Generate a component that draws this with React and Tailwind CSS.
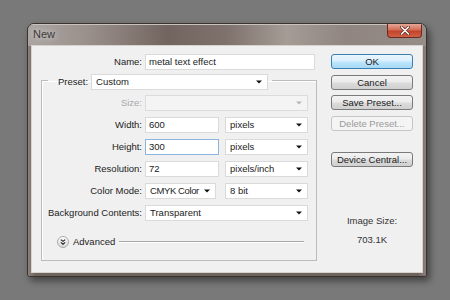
import React from "react";

function Arrow({ disabled }) {
  return (
    <svg width="6" height="4" viewBox="0 0 6 4" className="shrink-0">
      <path d="M0 0.5 L6 0.5 L3 3.5 Z" fill={disabled ? "#b5b5b5" : "#111"} />
    </svg>
  );
}

function Select({ w, text, disabled, className = "", textClass = "" }) {
  return (
    <div
      className={`${w} shrink-0 h-[16px] flex items-center justify-between pl-[4px] pr-[5px] border ${
        disabled ? "bg-[#f4f4f4] border-[#dcdcdc]" : "bg-white border-[#dadada]"
      } ${className}`}
    >
      <span className={`leading-none whitespace-nowrap ${textClass}`}>{text}</span>
      <Arrow disabled={disabled} />
    </div>
  );
}

function Input({ w, text, focus }) {
  return (
    <div
      className={`${w} shrink-0 h-[16px] flex items-center pl-[3px] bg-white border ${
        focus ? "border-[#8cb4de]" : "border-[#dadada]"
      }`}
    >
      <span className="leading-none whitespace-nowrap">{text}</span>
    </div>
  );
}

function Row({ label, children, disabled }) {
  return (
    <div className="h-[16px] flex items-center">
      <div className={`w-[103px] shrink-0 text-right pr-[3px] whitespace-nowrap ${disabled ? "text-[#a8a8a8]" : ""}`}>{label}</div>
      <div className="flex items-center">{children}</div>
    </div>
  );
}

function Btn({ children, ok, disabled, className = "" }) {
  let cls =
    "bg-[linear-gradient(180deg,#f3f3f3_0%,#ebebeb_48%,#dcdcdc_52%,#d0d0d0_100%)] border-[#7a7a7a] text-[#1a1a1a]";
  if (ok)
    cls =
      "bg-[linear-gradient(180deg,#eaf6fd_0%,#d9effc_48%,#bee6fd_52%,#a7d9f5_100%)] border-[#3c7fb1] text-[#1a1a1a]";
  if (disabled) cls = "bg-[#f4f4f4] border-[#c4c7c9] text-[#9a9a9a]";
  return (
    <div
      className={`w-[82px] h-[15px] rounded-[3px] border flex items-center justify-center leading-none whitespace-nowrap ${cls} ${className}`}
    >
      {children}
    </div>
  );
}

export default function App() {
  return (
    <div className="w-[450px] h-[300px] overflow-hidden bg-[#797979] pt-[23px] pl-[27px] font-['Liberation_Sans',Arial,sans-serif] text-[9.5px] text-[#222]">
      <div className="w-[400px] h-[254px] rounded-t-[7px] rounded-b-[3px] border border-[#3b3230] bg-[#6f635d] shadow-[3px_4px_7px_rgba(0,0,0,0.45),inset_0_0_0_1px_#9d928d] flex flex-col overflow-hidden">
        {/* title bar */}
        <div className="h-[22px] shrink-0 px-[4px] flex items-start justify-between bg-[linear-gradient(90deg,#aaa5a2_0%,#9a908b_15%,#72655f_35%,#7f726c_50%,#a59c96_65%,#908580_80%,#968c88_100%)] shadow-[inset_0_1px_0_#c9c3bf]">
          <div className="pt-[5px] pl-[1px] text-[11px] text-[#3a3a3a] leading-none [text-shadow:0_0_6px_rgba(255,255,255,0.8)]">
            New
          </div>
          <div className="w-[35px] h-[14px] rounded-b-[4px] border border-t-0 border-[#6b2a20] bg-[linear-gradient(180deg,#e6a796_0%,#d36d57_45%,#c2432b_55%,#d06244_100%)] flex items-center justify-center">
            <svg width="10" height="9" viewBox="0 0 10 9">
              <path d="M1.5 1 L8.5 8 M8.5 1 L1.5 8" stroke="#5a2a22" strokeWidth="3" strokeLinecap="round" />
              <path d="M1.5 1 L8.5 8 M8.5 1 L1.5 8" stroke="#fff" strokeWidth="1.6" strokeLinecap="round" />
            </svg>
          </div>
        </div>
        {/* frame + content */}
        <div className="flex-1 px-[4px] pb-[4px] bg-[linear-gradient(90deg,#8b807b_0%,#6f635d_2%,#6f635d_98%,#8b807b_100%)] flex">
          <div className="flex-1 bg-[#f0f0f0] flex shadow-[0_0_0_1px_#d8d2cf]">
            {/* left column */}
            <div className="w-[286px] shrink-0 pl-[9px] pt-[8px]">
              <div className="h-[16px] flex items-center">
                <div className="w-[104px] shrink-0 text-right pr-[3px]">Name:</div>
                <Input w="w-[170px]" text="metal text effect" />
              </div>
              <fieldset className="mt-[4px] w-[276px] min-w-0 h-[187px] border border-[#bcbcbc] shadow-[inset_1px_1px_0_#ffffff]">
                <legend className="ml-[6px] pl-[10px] pr-[4px] h-[12px]">
                  <div className="flex items-center h-[16px]">
                    <span className="pr-[3px]">Preset:</span>
                    <Select w="w-[177px]" text="Custom" />
                  </div>
                </legend>
                <div className="mt-[9px] flex flex-col gap-[6px]">
                  <Row label="Size:" disabled>
                    <Select w="w-[163px]" text="" disabled />
                  </Row>
                  <Row label="Width:">
                    <Input w="w-[74px]" text="600" />
                    <Select w="w-[83px]" text="pixels" className="ml-[6px]" />
                  </Row>
                  <Row label="Height:">
                    <Input w="w-[74px]" text="300" focus />
                    <Select w="w-[83px]" text="pixels" className="ml-[6px]" />
                  </Row>
                  <Row label="Resolution:">
                    <Input w="w-[74px]" text="72" />
                    <Select w="w-[83px]" text="pixels/inch" className="ml-[6px]" />
                  </Row>
                  <Row label="Color Mode:">
                    <Select w="w-[71px]" text="CMYK Color" textClass="tracking-[-0.4px]" className="pr-[4px]" />
                    <Select w="w-[83px]" text="8 bit" className="ml-[9px]" />
                  </Row>
                  <Row label="Background Contents:">
                    <Select w="w-[163px]" text="Transparent" />
                  </Row>
                </div>
                <div className="mt-[14px] h-[13px] flex items-center pl-[15px]">
                  <svg width="12" height="12" viewBox="0 0 12 12" className="shrink-0">
                    <defs>
                      <linearGradient id="adv" x1="0" y1="0" x2="0" y2="1">
                        <stop offset="0" stopColor="#ffffff" />
                        <stop offset="1" stopColor="#d6d6d6" />
                      </linearGradient>
                    </defs>
                    <circle cx="6" cy="6" r="5.5" fill="url(#adv)" stroke="#a9a9a9" />
                    <path d="M3.8 3.6 L6 5.4 L8.2 3.6 M3.8 6.4 L6 8.2 L8.2 6.4" fill="none" stroke="#222" strokeWidth="1.1" />
                  </svg>
                  <span className="ml-[4px] leading-none">Advanced</span>
                  <div className="ml-[4px] flex-1 mr-[12px] h-[2px] border-t border-[#a8a8a8] border-b border-b-white" />
                </div>
              </fieldset>
            </div>
            {/* right column */}
            <div className="ml-[13px] pt-[8px] flex flex-col">
              <Btn ok>OK</Btn>
              <Btn className="mt-[6px]">Cancel</Btn>
              <Btn className="mt-[5px]">Save Preset...</Btn>
              <Btn className="mt-[6px]" disabled>
                Delete Preset...
              </Btn>
              <Btn className="mt-[21px]">Device Central...</Btn>
              <div className="mt-[48px] text-center leading-[12px] text-[#333]">Image Size:</div>
              <div className="mt-[7px] text-center leading-[12px] text-[#333]">703.1K</div>
            </div>
          </div>
        </div>
      </div>
    </div>
  );
}
